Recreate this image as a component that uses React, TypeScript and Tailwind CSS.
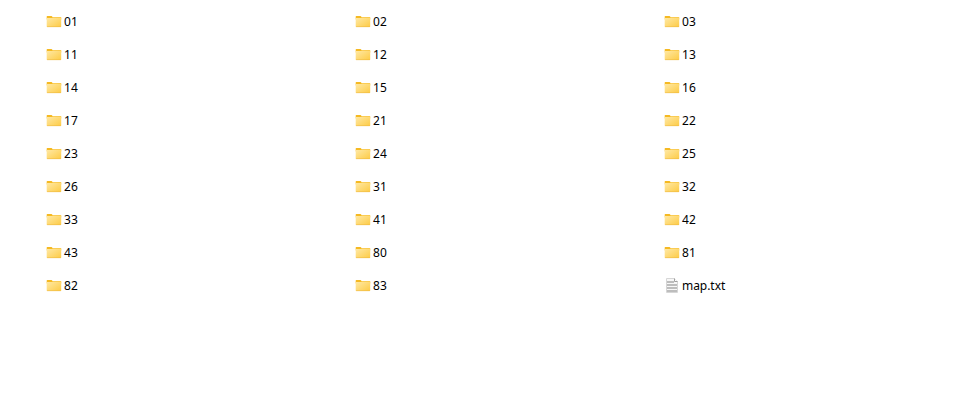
const names = [
  '01', '02', '03', '11', '12', '13', '14', '15', '16',
  '17', '21', '22', '23', '24', '25', '26', '31', '32',
  '33', '41', '42', '43', '80', '81', '82', '83', 'map.txt',
];

function FolderIcon() {
  return (
    <svg className="h-4 w-4 shrink-0" viewBox="0 0 16 16" aria-hidden="true">
      <defs>
        <linearGradient id="folder" x1="0" y1="0" x2="1" y2="1">
          <stop offset="0" stopColor="#ffe9a6" />
          <stop offset="1" stopColor="#fdcb45" />
        </linearGradient>
      </defs>
      <path d="M.7 2.4c0-.3.2-.5.6-.5h4.3l1 1h8.1c.3 0 .5.2.5.5v2H.7Z" fill="#f5b922" />
      <path d="M.7 4.1h5.4l.7-.5h8.4v8.8c0 .3-.2.6-.6.6H1.3c-.3 0-.6-.2-.6-.6Z" fill="url(#folder)" />
      <path d="M1.1 12.7h13.7" stroke="#efb943" strokeWidth=".6" />
    </svg>
  );
}

function TextFileIcon() {
  return (
    <svg className="h-4 w-4 shrink-0" viewBox="0 0 16 16" aria-hidden="true">
      <path d="M2.5.5h8l3 3v11h-11Z" fill="#f7f7f7" stroke="#d6d6d6" />
      <path d="M10.5.5v3h3" fill="#fff" stroke="#a0a0a0" />
      <path d="M3 4h7M3 7h10M3 10h10M3 13h10" stroke="#bdbdbd" strokeWidth="2" />
    </svg>
  );
}

export default function App() {
  return (
    <main className="h-[406px] w-[963px] overflow-hidden bg-white pt-[5px] pl-[46px] font-['Noto_Sans','Open_Sans',sans-serif] text-xs text-black">
      <ul className="grid auto-rows-[33px] grid-cols-[309px_309px_1fr]">
        {names.map((name) => (
          <li key={name} className="flex items-center gap-0.5">
            {name.endsWith('.txt') ? <TextFileIcon /> : <FolderIcon />}
            <span className={name.endsWith('.txt') ? 'tracking-[-0.05px]' : 'tracking-[0.2px]'}>{name}</span>
          </li>
        ))}
      </ul>
    </main>
  );
}
